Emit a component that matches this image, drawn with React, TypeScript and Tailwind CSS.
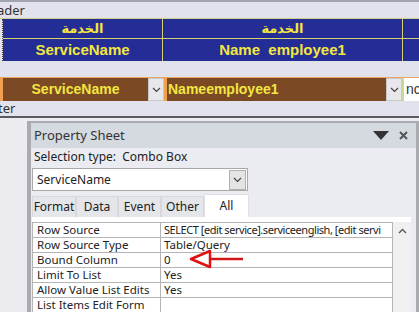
import React from "react";

const rows: [string, string][] = [
  ["Row Source", "SELECT [edit service].serviceenglish, [edit servi"],
  ["Row Source Type", "Table/Query"],
  ["Bound Column", "0"],
  ["Limit To List", "Yes"],
  ["Allow Value List Edits", "Yes"],
  ["List Items Edit Form", ""],
];

function Chevron() {
  return (
    <svg width="9" height="6" viewBox="0 0 9 6">
      <path d="M1 1 L4.5 4.5 L8 1" fill="none" stroke="#444" strokeWidth="1.2" />
    </svg>
  );
}

export default function App() {
  return (
    <div className="w-[419px] h-[312px] overflow-hidden bg-[#e6e6ee] relative font-['Noto_Sans',sans-serif]">
      {/* top designer area */}
      <div className="h-[2px] bg-[#a4a4b0]" />
      <div className="h-[16px] bg-[#e2e2ec] text-[13px] leading-[16px] text-[#333] -ml-[3px] whitespace-nowrap">ader</div>
      <div className="h-[1px] bg-[#cfcf8a]" />
      {/* blue header table */}
      <div className="flex h-[42px]">
        <div className="w-[3px] border-r border-dotted border-[#444] bg-[#e2e2ec]" />
        <div className="flex-1 grid grid-cols-[159px_1px_239px_1px_1fr] grid-rows-[19px_1px_22px] bg-[#232d95] font-['DejaVu_Sans',sans-serif] text-[#f3e640] font-bold">
          <div className="flex items-center justify-center text-[13px] leading-[19px]">الخدمة</div>
          <div className="bg-[#d9d070]" />
          <div className="flex items-center justify-center text-[13px] leading-[19px]">الخدمة</div>
          <div className="bg-[#d9d070]" />
          <div />
          <div className="col-span-5 bg-[#d9d070]" />
          <div className="flex items-center justify-center text-[15px] font-['Liberation_Sans',sans-serif]">ServiceName</div>
          <div className="bg-[#d9d070]" />
          <div className="flex items-center justify-center text-[15px] font-['Liberation_Sans',sans-serif] whitespace-pre">Name  employee1</div>
          <div className="bg-[#d9d070]" />
          <div />
        </div>
      </div>
      <div className="h-[16px] bg-[#e2e2ec]" />
      {/* brown detail row */}
      <div className="flex h-[24px] border-t border-[#e8a860] font-['Liberation_Sans',sans-serif] font-bold text-[#f3e640]">
        <div className="w-[3px] bg-[#f0a050]" />
        <div className="w-[145px] bg-[#7b4a25] flex items-center justify-center text-[14px]">ServiceName</div>
        <div className="w-[16px] bg-[#e8e8ec] border border-[#c8c8c8] flex items-center justify-center"><Chevron /></div>
        <div className="w-[3px] bg-[#f0a050]" />
        <div className="w-[219px] bg-[#7b4a25] flex items-center pl-[1px] text-[14px]">Nameemployee1</div>
        <div className="w-[16px] bg-[#e8e8ec] border border-[#c8c8c8] flex items-center justify-center"><Chevron /></div>
        <div className="w-[2px] bg-[#c4dc98]" />
        <div className="flex-1 bg-white text-[#333] font-normal text-[14px] flex items-center pl-[2px] overflow-hidden whitespace-nowrap">nc</div>
      </div>
      <div className="h-[15px] bg-[#e2e2ec] text-[13px] leading-[15px] text-[#333] -ml-[2px] whitespace-nowrap">ter</div>
      <div className="h-[2px] bg-[#5a5a60]" />

      {/* lower area with property sheet */}
      <div className="flex h-[200px] bg-[#ebebf0] pt-[3px]">
        <div className="w-[27px]" />
        <div className="w-[390px] border-l-[4px] border-t-[2px] border-r-[1px] border-[#a9abb0] bg-[#eaecf1] flex flex-col text-[12px] text-[#222]">
          {/* title bar */}
          <div className="h-[25px] bg-[#d5d9e0] flex items-center pl-[3px] pr-[8px]">
            <span className="text-[13px] text-[#333]">Property Sheet</span>
            <div className="ml-auto flex items-center gap-[10px]">
              <svg width="16" height="9" viewBox="0 0 16 9"><path d="M0 0 H16 L8 9 Z" fill="#333" /></svg>
              <svg width="9" height="9" viewBox="0 0 9 9"><path d="M1 1 L8 8 M8 1 L1 8" stroke="#555" strokeWidth="2" /></svg>
            </div>
          </div>
          <div className="h-[18px] flex items-center pl-[3px] text-[12px] whitespace-pre">Selection type:  Combo Box</div>
          <div className="ml-[1px] mt-[2px] w-[216px] h-[23px] border border-[#a8a8a8] bg-white flex items-center">
            <span className="pl-[4px] flex-1">ServiceName</span>
            <div className="w-[17px] h-[20px] mr-[1px] bg-[#e4e4e4] border border-[#b0b0b0] flex items-center justify-center"><Chevron /></div>
          </div>
          {/* tabs */}
          <div className="mt-[3px] ml-[1px] flex items-end h-[23px]">
            {["Format", "Data", "Event", "Other"].map((t, i) => (
              <div key={t} className={`h-[21px] flex items-center justify-center border border-b-0 border-[#d8d8dc] bg-[#e4e6ea] ${["w-[44px]", "w-[42px]", "w-[43px]", "w-[43px]"][i]}`}>{t}</div>
            ))}
            <div className="w-[45px] h-[23px] bg-white flex items-center justify-center border border-b-0 border-[#e0e0e0]">All</div>
          </div>
          {/* grid */}
          <div className="ml-[1px] w-[379px] flex-1 bg-white flex pt-[5px]">
            <div className="w-[361px] border-l border-t border-[#b4b4b4]">
              {rows.map(([k, v], i) => (
                <div key={k} className="flex h-[15px] border-b border-[#b4b4b4] leading-[14px] text-[11.5px]">
                  <div className="w-[128px] border-r border-[#b4b4b4] pl-[4px] whitespace-nowrap overflow-hidden">{k}</div>
                  <div className={`flex-1 pl-[3px] whitespace-nowrap overflow-hidden border-r border-[#b4b4b4] ${i === 0 ? "tracking-[-0.45px] text-[11px]" : ""}`}>{v}</div>
                </div>
              ))}
            </div>
            <div className="w-[18px] bg-[#f0f0f0] flex justify-center pt-[6px]">
              <svg width="9" height="6" viewBox="0 0 9 6"><path d="M1 5 L4.5 1.5 L8 5" fill="none" stroke="#555" strokeWidth="1.3" /></svg>
            </div>
          </div>
        </div>
        <div className="flex-1 bg-[#a9abb0]" />
      </div>

      {/* red annotation arrow */}
      <svg className="absolute left-[188px] top-[249px]" width="58" height="20" viewBox="0 0 58 20">
        <path d="M3 10 L22 2 L22 18 Z" fill="none" stroke="#e01010" strokeWidth="2.5" strokeLinejoin="round" />
        <path d="M22 10 H55" stroke="#d01818" strokeWidth="2.5" />
      </svg>
    </div>
  );
}
